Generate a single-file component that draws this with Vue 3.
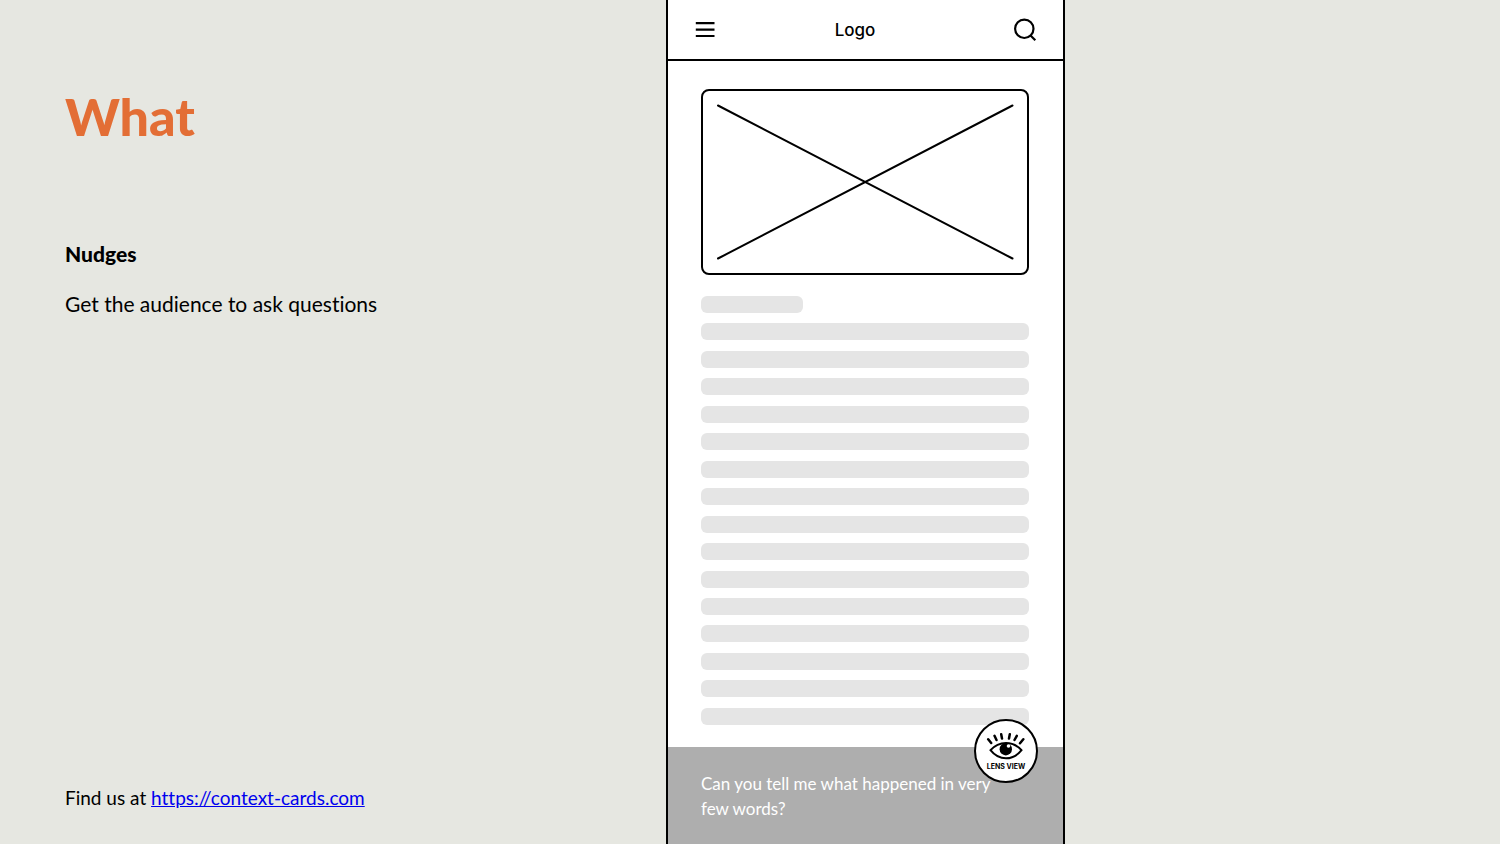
<script setup>
import { ref } from 'vue'

const siteUrl = 'https://context-cards.com'
const question = ref('Can you tell me what happened in very few words?')
const lineCount = 16
</script>

<template>
  <main class="slide">
    <section class="notes">
      <h1>What</h1>
      <h2>Nudges</h2>
      <p class="lead">Get the audience to ask questions</p>
      <p class="find">Find us at <a :href="siteUrl">{{ siteUrl }}</a></p>
    </section>

    <section class="phone">
      <header class="topbar">
        <button type="button" class="icon-btn" aria-label="Menu">
          <svg width="20" height="24" viewBox="0 0 20 24">
            <path d="M.8 5.200h18.700M.8 11.600h18.700M.8 18h18.700" />
          </svg>
        </button>
        <span class="logo">Logo</span>
        <button type="button" class="icon-btn" aria-label="Search">
          <svg width="24" height="24" viewBox="0 0 24 24">
            <circle cx="11.300" cy="10.800" r="9.200" />
            <path d="M17.300 17.300l5 5" />
          </svg>
        </button>
      </header>

      <div class="content">
        <svg class="image" viewBox="0 0 328 186">
          <rect x="1" y="1" width="326" height="184" rx="7" />
          <path d="M17 16.500l294.500 153M311.500 16.500L17 169.500" />
        </svg>
        <div class="lines">
          <div v-for="n in lineCount" :key="n" class="line" :class="{ short: n === 1 }"></div>
        </div>
      </div>

      <footer class="prompt">
        <p>{{ question }}</p>
        <button type="button" class="lens">
          <svg width="40" height="28" viewBox="0 0 40 28">
            <path class="lash" d="M2.200 7.200l3 3.800M8.500 3.800l2 4.200M15.200 2.200l.8 4.300M23.800 2.200l-.8 4.300M30.800 3.800L28.500 8M37.300 7.200L34 11.200" />
            <path class="lid" d="M4.500 18.200C13 8.500 27 8.500 35.500 18.200C27 29 13 29 4.500 18.200Z" />
            <circle class="pupil" cx="19.800" cy="17.200" r="6.200" />
            <circle class="glint" cx="22.500" cy="14" r="1.800" />
          </svg>
          <span>LENS VIEW</span>
        </button>
      </footer>
    </section>
  </main>
</template>

<style>
body {
  margin: 0;
  background: #e6e7e1;
}
</style>

<style scoped>
.slide {
  display: grid;
  grid-template-columns: 666fr 399px 435fr;
  min-height: 100vh;
  font-family: Lato, sans-serif;
  font-variant-ligatures: none;
  color: #000;
}

.notes {
  display: flex;
  flex-direction: column;
  padding: 85px 24px 31px 65px;
}

h1,
h2,
p {
  margin: 0;
}

h1 {
  margin-bottom: 92px;
  font-size: 52px;
  font-weight: 900;
  line-height: 62px;
  color: #e36e35;
}

h2 {
  margin-bottom: 20px;
  font-size: 21px;
  font-weight: 900;
  line-height: 30px;
}

.lead {
  font-size: 21px;
  line-height: 30px;
}

.find {
  margin-top: auto;
  font-size: 19px;
  line-height: 30px;
}

.find a {
  color: #0000ee;
}

.phone {
  display: flex;
  flex-direction: column;
  border: solid #000;
  border-width: 0 2px;
  background: #fff;
}

svg {
  display: block;
  fill: none;
  stroke: #000;
  stroke-width: 2;
}

.topbar {
  display: flex;
  align-items: center;
  justify-content: space-between;
  height: 59px;
  padding: 0 26px 0 27px;
  border-bottom: 2px solid #000;
}

.icon-btn {
  padding: 0;
  border: 0;
  background: none;
}

.icon-btn svg {
  stroke-width: 2.200;
}

.logo {
  margin-right: 18px;
  font-family: Inter, sans-serif;
  font-size: 17px;
  font-weight: 500;
}

.content {
  flex: 1;
  display: flex;
  flex-direction: column;
  gap: 21px;
  padding: 28px 34px 22px 33px;
}

.image {
  width: 100%;
}

.image path {
  stroke-linecap: round;
}

.lines {
  flex: 1;
  display: flex;
  flex-direction: column;
  justify-content: space-between;
  gap: 8px;
}

.line {
  height: 17px;
  border-radius: 6px;
  background: #e5e5e5;
}

.line.short {
  width: 102px;
}

.prompt {
  position: relative;
  padding: 24px 56px 23px 33px;
  background: #aeaeae;
  color: #fff;
  font-size: 17px;
  line-height: 25px;
}

.lens {
  position: absolute;
  top: -28px;
  right: 25px;
  display: flex;
  flex-direction: column;
  align-items: center;
  gap: 3px;
  width: 64px;
  height: 64px;
  padding: 11px 0 0;
  border: 2px solid #000;
  border-radius: 50%;
  background: #fff;
  color: #000;
  font: 700 7px/8px Inter, sans-serif;
}

.lash {
  stroke-width: 2.500;
  stroke-linecap: round;
}

.lid {
  stroke-width: 2;
}

.pupil {
  fill: #000;
  stroke: none;
}

.glint {
  fill: #fff;
  stroke: none;
}
</style>
